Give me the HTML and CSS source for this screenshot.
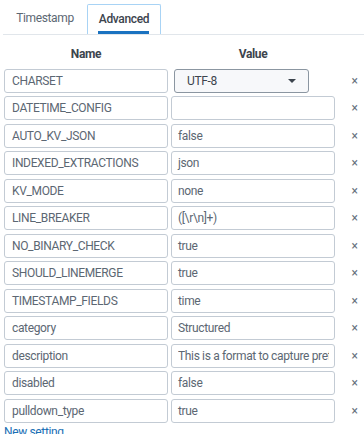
FILE: index.html
```html
<!DOCTYPE html>
<html>
<head>
<meta charset="utf-8">
<link rel="stylesheet" href="styles.css">
</head>
<body>
<div class="page">
  <div class="tabs">
    <div class="tab">Timestamp</div>
    <div class="tab active">Advanced</div>
  </div>
  <div class="grid">
    <div class="head">Name</div>
    <div class="head">Value</div>
    <div></div>

    <div class="field">CHARSET</div>
    <div class="selcell"><div class="select"><span>UTF-8</span><span class="caret"></span></div></div>
    <div class="close">×</div>

    <div class="field">DATETIME_CONFIG</div>
    <div class="field val"></div>
    <div class="close">×</div>

    <div class="field">AUTO_KV_JSON</div>
    <div class="field val">false</div>
    <div class="close">×</div>

    <div class="field">INDEXED_EXTRACTIONS</div>
    <div class="field val">json</div>
    <div class="close">×</div>

    <div class="field">KV_MODE</div>
    <div class="field val">none</div>
    <div class="close">×</div>

    <div class="field">LINE_BREAKER</div>
    <div class="field val">([\r\n]+)</div>
    <div class="close">×</div>

    <div class="field">NO_BINARY_CHECK</div>
    <div class="field val">true</div>
    <div class="close">×</div>

    <div class="field">SHOULD_LINEMERGE</div>
    <div class="field val">true</div>
    <div class="close">×</div>

    <div class="field">TIMESTAMP_FIELDS</div>
    <div class="field val">time</div>
    <div class="close">×</div>

    <div class="field">category</div>
    <div class="field val">Structured</div>
    <div class="close">×</div>

    <div class="field">description</div>
    <div class="field val"><span class="clip">This is a format to capture prefixed JSON events</span></div>
    <div class="close">×</div>

    <div class="field">disabled</div>
    <div class="field val">false</div>
    <div class="close">×</div>

    <div class="field">pulldown_type</div>
    <div class="field val">true</div>
    <div class="close">×</div>
  </div>
  <a class="newlink" href="#">New setting</a>
</div>
</body>
</html>
```

FILE: styles.css
```css
html, body {
  margin: 0;
  padding: 0;
  background: #ffffff;
}
body {
  font-family: Roboto, "Liberation Sans", sans-serif;
  font-size: 12px;
  letter-spacing: -0.35px;
  color: #3c444d;
}
.page {
  padding: 4px 0 0 4px;
  width: 360px;
  overflow: hidden;
}
.tabs {
  display: flex;
  border-bottom: 1px solid #e1e6eb;
  height: 30px;
  margin-left: -1px;
}
.tab {
  position: relative;
  box-sizing: border-box;
  width: 84px;
  height: 30px;
  line-height: 29px;
  text-align: center;
  color: #5c6773;
}
.tab.active {
  width: 74px;
  color: #3c444d;
  font-weight: 500;
  border: 1px solid #a8d3f5;
  border-bottom: none;
  border-radius: 2px 2px 0 0;
}
.tab.active::after {
  content: "";
  position: absolute;
  left: 10px;
  right: 11px;
  bottom: 0;
  height: 3px;
  background: #1a72c0;
}
.grid {
  display: grid;
  grid-template-columns: 164px 164px 26px;
  column-gap: 3px;
  row-gap: 3.5px;
  margin-top: 10px;
}
.head {
  text-align: center;
  font-weight: 700;
  height: 20px;
  line-height: 18px;
  color: #3c444d;
}
.field {
  box-sizing: border-box;
  height: 24px;
  line-height: 22px;
  border: 1px solid #c3cbd4;
  border-radius: 3px;
  padding: 0 7px;
  color: #5c6773;
  white-space: nowrap;
  overflow: hidden;
}
.field.val {
  padding: 0 6px;
}
.clip {
  display: block;
  overflow: hidden;
  width: 151px;
}
.selcell {
  padding-left: 3px;
}
.select {
  box-sizing: border-box;
  width: 135px;
  height: 24px;
  border: 1px solid #8b96a1;
  border-radius: 3px;
  padding: 0 12px 0 12px;
  display: flex;
  align-items: center;
  justify-content: space-between;
  color: #3c444d;
  background: #f7f8fa;
}
.caret {
  width: 0;
  height: 0;
  border-left: 4px solid transparent;
  border-right: 4px solid transparent;
  border-top: 4px solid #3c444d;
}
.close {
  text-align: center;
  line-height: 24px;
  color: #66717d;
  font-size: 12px;
  padding-left: 7px;
}
.newlink {
  display: block;
  margin-top: 2px;
  color: #1a6fb5;
  text-decoration: none;
  line-height: 14px;
  font-size: 12px;
}
```
